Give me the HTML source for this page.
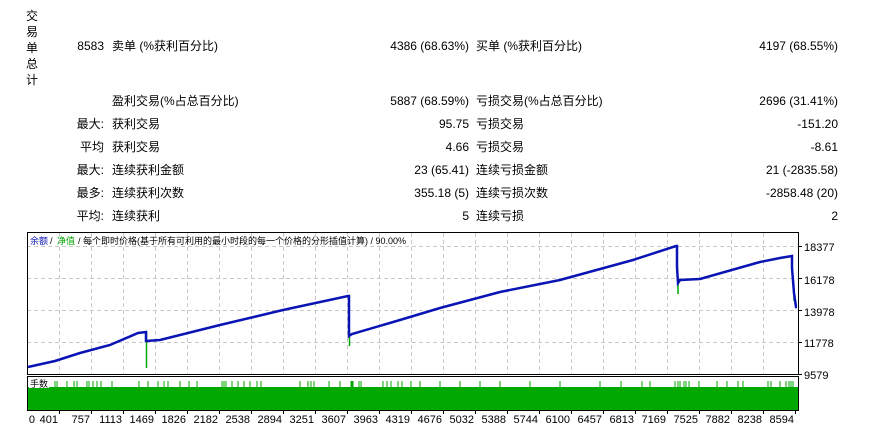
<!DOCTYPE html>
<html><head><meta charset="utf-8"><style>
body{margin:0;width:875px;height:431px;background:#fff;overflow:hidden;position:relative;font-family:"Liberation Sans","Noto Sans CJK SC",sans-serif;font-size:12px;color:#000}
.t{position:absolute;white-space:nowrap;line-height:14px}
.r{text-align:right}
</style></head><body>
<div class="t" style="left:26px;top:8px;line-height:16px;width:14px">交<br>易<br>单<br>总<br>计</div>
<div class="t r" style="right:771px;top:39px">8583</div>
<div class="t" style="left:112px;top:39px">卖单 (%获利百分比)</div>
<div class="t r" style="right:406px;top:39px">4386 (68.63%)</div>
<div class="t" style="left:476px;top:39px">买单 (%获利百分比)</div>
<div class="t r" style="right:37px;top:39px">4197 (68.55%)</div>

<div class="t" style="left:112px;top:94px">盈利交易(%占总百分比)</div>
<div class="t r" style="right:406px;top:94px">5887 (68.59%)</div>
<div class="t" style="left:476px;top:94px">亏损交易(%占总百分比)</div>
<div class="t r" style="right:37px;top:94px">2696 (31.41%)</div>

<div class="t r" style="right:771px;top:117px">最大:</div>
<div class="t" style="left:112px;top:117px">获利交易</div>
<div class="t r" style="right:406px;top:117px">95.75</div>
<div class="t" style="left:476px;top:117px">亏损交易</div>
<div class="t r" style="right:37px;top:117px">-151.20</div>

<div class="t r" style="right:771px;top:140px">平均</div>
<div class="t" style="left:112px;top:140px">获利交易</div>
<div class="t r" style="right:406px;top:140px">4.66</div>
<div class="t" style="left:476px;top:140px">亏损交易</div>
<div class="t r" style="right:37px;top:140px">-8.61</div>

<div class="t r" style="right:771px;top:163px">最大:</div>
<div class="t" style="left:112px;top:163px">连续获利金额</div>
<div class="t r" style="right:406px;top:163px">23 (65.41)</div>
<div class="t" style="left:476px;top:163px">连续亏损金额</div>
<div class="t r" style="right:37px;top:163px">21 (-2835.58)</div>

<div class="t r" style="right:771px;top:186px">最多:</div>
<div class="t" style="left:112px;top:186px">连续获利次数</div>
<div class="t r" style="right:406px;top:186px">355.18 (5)</div>
<div class="t" style="left:476px;top:186px">连续亏损次数</div>
<div class="t r" style="right:37px;top:186px">-2858.48 (20)</div>

<div class="t r" style="right:771px;top:209px">平均:</div>
<div class="t" style="left:112px;top:209px">连续获利</div>
<div class="t r" style="right:406px;top:209px">5</div>
<div class="t" style="left:476px;top:209px">连续亏损</div>
<div class="t r" style="right:37px;top:209px">2</div>

<svg width="875" height="431" style="position:absolute;left:0;top:0" font-family="Liberation Sans, Noto Sans CJK SC, sans-serif" font-size="11">
<g stroke="#c8c8c8" stroke-dasharray="4,3" stroke-width="1">
<path d="M27 246.5H798M27 278.5H798M27 310.5H798M27 342.5H798"/>
<path d="M59.5 233V375M91.5 233V375M123.5 233V375M155.5 233V375M187.5 233V375M219.5 233V375M251.5 233V375M283.5 233V375M315.5 233V375M347.5 233V375M379.5 233V375M411.5 233V375M443.5 233V375M475.5 233V375M507.5 233V375M539.5 233V375M571.5 233V375M603.5 233V375M635.5 233V375M667.5 233V375M699.5 233V375M731.5 233V375M763.5 233V375"/>
</g>
<rect x="27.5" y="232.5" width="771" height="142" fill="none" stroke="#000"/>
<g stroke="#00a800" stroke-width="1.5">
<path d="M146.5 332V368M349.5 336V346M678 282V294M794 292V301"/>
</g>
<polyline fill="none" stroke="#0a14b4" stroke-width="2.5" points="28,367 55,361 80,353 110,345 138,333 146,332 146,341 160,340 220,325 283,310 348,296 349,296 349,336 352,334 400,320 440,308 500,292 560,280 633,260 676,246 677,246 677,267 678,283 680,280 700,279 760,262 780,258 792,256 792,268 794,293 796,307 797,307"/>
<text x="30" y="244" font-size="9" fill="#0a14b4">余额</text>
<text x="50" y="244" font-size="9">/</text>
<text x="57" y="244" font-size="9" fill="#00a800">净值</text>
<text x="78" y="244" font-size="9">/ 每个即时价格(基于所有可利用的最小时段的每一个价格的分形插值计算) / 90.00%</text>
<g font-size="11">
<text x="804" y="251">18377</text><text x="804" y="284">16178</text><text x="804" y="316">13978</text><text x="804" y="347">11778</text><text x="804" y="379">9579</text>
</g>
<g stroke="#000"><path d="M798 246.5h4M798 278.5h4M798 310.5h4M798 342.5h4M798 374.5h4"/></g>
<rect x="27" y="387" width="771" height="24" fill="#00a800"/>
<g stroke="#00a800" stroke-width="1">
<path d="M55 381v6M57 381v6M67 381v6M74 381v6M77 381v6M87 381v6M89 381v6M93 381v6M97 381v6M101 381v6M112 381v6M139 381v6M148 381v6M158 381v6M164 381v6M168 381v6M180 381v6M189 381v6M197 381v6M222 381v6M224 381v6M226 381v6M232 381v6M238 381v6M244 381v6M250 381v6M257 381v6M261 381v6M300 381v6M308 381v6M311 381v6M314 381v6M329 381v6M340 381v6M351 381v6M352 381v6M353 381v6M359 381v6M361 381v6M383 381v6M387 381v6M391 381v6M398 381v6M402 381v6M411 381v6M420 381v6M440 381v6M460 381v6M480 381v6M500 381v6M530 381v6M560 381v6M600 381v6M621 381v6M642 381v6M650 381v6M675 381v6M678 381v6M680 381v6M684 381v6M686 381v6M689 381v6M699 381v6M717 381v6M727 381v6M738 381v6M743 381v6M768 381v6M771 381v6M780 381v6M786 381v6M789 381v6M791 381v6M793 381v6"/>
</g>
<rect x="29" y="379" width="20" height="9" fill="#fff"/>
<text x="30" y="387" font-size="9">手数</text>
<rect x="27.5" y="376.5" width="771" height="34" fill="none" stroke="#000"/>
<g stroke="#000"><path d="M59.5 411v3M91.5 411v3M123.5 411v3M155.5 411v3M187.5 411v3M219.5 411v3M251.5 411v3M283.5 411v3M315.5 411v3M347.5 411v3M379.5 411v3M411.5 411v3M443.5 411v3M475.5 411v3M507.5 411v3M539.5 411v3M571.5 411v3M603.5 411v3M635.5 411v3M667.5 411v3M699.5 411v3M731.5 411v3M763.5 411v3M795.5 411v3"/></g>
<g font-size="11" text-anchor="end">
<text x="35" y="423">0</text><text x="58" y="423">401</text><text x="90" y="423">757</text><text x="122" y="423">1113</text><text x="154" y="423">1469</text><text x="186" y="423">1826</text><text x="218" y="423">2182</text><text x="250" y="423">2538</text><text x="282" y="423">2894</text><text x="314" y="423">3251</text><text x="346" y="423">3607</text><text x="378" y="423">3963</text><text x="410" y="423">4319</text><text x="442" y="423">4676</text><text x="474" y="423">5032</text><text x="506" y="423">5388</text><text x="538" y="423">5744</text><text x="570" y="423">6100</text><text x="602" y="423">6457</text><text x="634" y="423">6813</text><text x="666" y="423">7169</text><text x="698" y="423">7525</text><text x="730" y="423">7882</text><text x="762" y="423">8238</text><text x="794" y="423">8594</text>
</g>
</svg>
</body></html>
